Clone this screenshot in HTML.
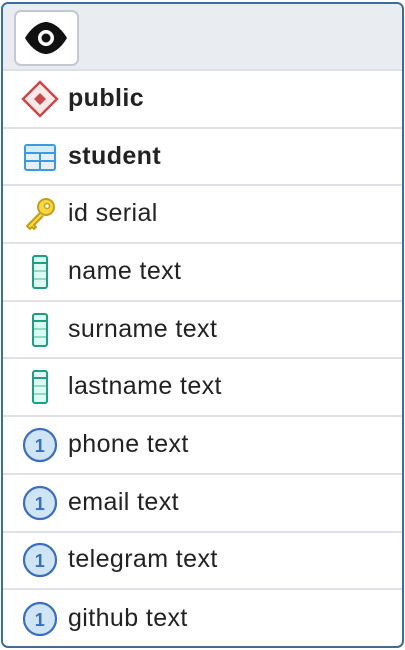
<!DOCTYPE html>
<html><head><meta charset="utf-8"><style>
*{margin:0;padding:0;box-sizing:border-box}
body{width:405px;height:650px;background:#fff;font-family:"Liberation Sans",sans-serif;overflow:hidden;position:relative}
.box{position:absolute;left:1px;top:2px;width:403px;height:646px;border:2px solid #3d6d99;border-radius:7px;overflow:hidden;background:#fff}
.hdr{height:67px;background:#e9ecf1;border-bottom:2px solid #dde0e5;position:relative}
.btn{position:absolute;left:11px;top:6px;width:65px;height:56px;background:#fff;border:2px solid #c3c8d1;border-radius:7px}
.row{height:57.7px;border-bottom:2px solid #dfe1e6;position:relative;font-size:25px;letter-spacing:0.4px;color:#222}
.row:last-child{border-bottom:none}
.row span{position:absolute;left:65px;top:50%;transform:translateY(-52%)}
.row svg{position:absolute;left:17px;top:50%;transform:translateY(-50%)}
b{font-weight:bold}
</style></head><body>
<div class="box">
<div class="hdr"><div class="btn"><svg width="65" height="56" viewBox="0 0 65 56" style="position:absolute;left:-2px;top:-2px"><path d="M11 28 C18 16 27 12 32 12 C37 12 46 16 53 28 C46 40 37 44 32 44 C27 44 18 40 11 28Z" fill="#111"/><circle cx="32" cy="28" r="8" fill="#fff"/><circle cx="32" cy="28" r="4.5" fill="#111"/></svg></div></div>
<div class="row"><svg width="40" height="40" viewBox="0 0 40 40"><path d="M20 3 L37 20 L20 37 L3 20Z" fill="#fde8e8" stroke="#c9484a" stroke-width="2.5"/><path d="M20 14 L26 20 L20 26 L14 20Z" fill="#c9484a"/></svg><span><b>public</b></span></div>
<div class="row"><svg width="40" height="40" viewBox="0 0 40 40"><rect x="5" y="8" width="30" height="25" rx="2" fill="#e8eef3" stroke="#3b9ae0" stroke-width="2"/><rect x="6" y="9" width="28" height="6" fill="#d7ebfa"/><path d="M5 16h30M5 24h30M20 16v17" stroke="#3b9ae0" stroke-width="2"/></svg><span><b>student</b></span></div>
<div class="row"><svg width="40" height="40" viewBox="0 0 40 40"><circle cx="26" cy="13" r="8" fill="#f7d740" stroke="#c4a01a" stroke-width="2"/><circle cx="27" cy="12" r="2.5" fill="#fff" stroke="#c4a01a" stroke-width="1.5"/><path d="M20 19 L7 32 L10 35 L12 33 L14 35 L16 33 L14 31 L23 22" fill="#f7d740" stroke="#c4a01a" stroke-width="2" stroke-linejoin="round"/></svg><span>id serial</span></div>
<div class="row"><svg width="40" height="40" viewBox="0 0 40 40"><rect x="13" y="4" width="14" height="32" rx="2" fill="#dcfbf4" stroke="#1f9e80" stroke-width="2"/><path d="M13 19h14M13 27h14" stroke="#1f9e80" stroke-width="1.5" opacity=".5"/><path d="M13 11h14" stroke="#1f9e80" stroke-width="2"/></svg><span>name text</span></div>
<div class="row"><svg width="40" height="40" viewBox="0 0 40 40"><rect x="13" y="4" width="14" height="32" rx="2" fill="#dcfbf4" stroke="#1f9e80" stroke-width="2"/><path d="M13 19h14M13 27h14" stroke="#1f9e80" stroke-width="1.5" opacity=".5"/><path d="M13 11h14" stroke="#1f9e80" stroke-width="2"/></svg><span>surname text</span></div>
<div class="row"><svg width="40" height="40" viewBox="0 0 40 40"><rect x="13" y="4" width="14" height="32" rx="2" fill="#dcfbf4" stroke="#1f9e80" stroke-width="2"/><path d="M13 19h14M13 27h14" stroke="#1f9e80" stroke-width="1.5" opacity=".5"/><path d="M13 11h14" stroke="#1f9e80" stroke-width="2"/></svg><span>lastname text</span></div>
<div class="row"><svg width="40" height="40" viewBox="0 0 40 40"><circle cx="20" cy="20" r="16" fill="#cfe4f5" stroke="#3a6fc0" stroke-width="2.2"/><text x="20" y="27" text-anchor="middle" font-size="18" font-weight="bold" fill="#3a6fc0" font-family="Liberation Sans">1</text></svg><span>phone text</span></div>
<div class="row"><svg width="40" height="40" viewBox="0 0 40 40"><circle cx="20" cy="20" r="16" fill="#cfe4f5" stroke="#3a6fc0" stroke-width="2.2"/><text x="20" y="27" text-anchor="middle" font-size="18" font-weight="bold" fill="#3a6fc0" font-family="Liberation Sans">1</text></svg><span>email text</span></div>
<div class="row"><svg width="40" height="40" viewBox="0 0 40 40"><circle cx="20" cy="20" r="16" fill="#cfe4f5" stroke="#3a6fc0" stroke-width="2.2"/><text x="20" y="27" text-anchor="middle" font-size="18" font-weight="bold" fill="#3a6fc0" font-family="Liberation Sans">1</text></svg><span>telegram text</span></div>
<div class="row"><svg width="40" height="40" viewBox="0 0 40 40"><circle cx="20" cy="20" r="16" fill="#cfe4f5" stroke="#3a6fc0" stroke-width="2.2"/><text x="20" y="27" text-anchor="middle" font-size="18" font-weight="bold" fill="#3a6fc0" font-family="Liberation Sans">1</text></svg><span>github text</span></div>
</div>
</body></html>
